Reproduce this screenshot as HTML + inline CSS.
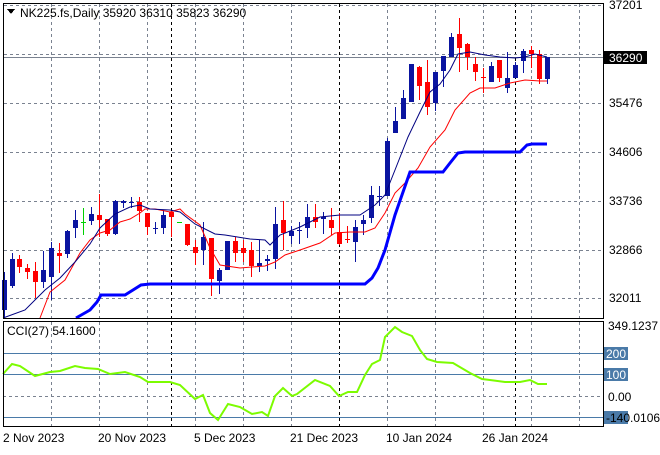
<!DOCTYPE html>
<html><head><meta charset="utf-8"><style>
html,body{margin:0;padding:0;background:#fff;}
body{width:660px;height:450px;overflow:hidden;font-family:"Liberation Sans",sans-serif;}
svg text{font-family:"Liberation Sans",sans-serif;font-size:12px;fill:#000;}
</style></head><body>
<svg id="s" width="660" height="450" xmlns="http://www.w3.org/2000/svg" shape-rendering="crispEdges">
<rect width="660" height="450" fill="#fff"/>
<g id="grid" stroke="#7a8290" stroke-dasharray="3,3" stroke-width="1"></g>
<line x1="3" y1="57.5" x2="603" y2="57.5" stroke="#7a8290"/>
<g stroke="#4a7aa8"><line x1="3" y1="353.5" x2="603" y2="353.5"/><line x1="3" y1="374.5" x2="603" y2="374.5"/><line x1="3" y1="417.5" x2="603" y2="417.5"/></g>
<line x1="3" y1="396.5" x2="603" y2="396.5" stroke="#7a8290" stroke-dasharray="3,3"/>
<g id="c"></g>
<g fill="none" shape-rendering="auto">
<polyline stroke="#ff0000" stroke-width="1" points="40,318 50,292 65,280 80,253 90,240 100,233 110,230 120,222 130,219 140,213 145,209 155,209 170,212 180,209 185,214 200,225 210,248 220,265 240,268 265,266 275,262 285,255 300,250 320,243 335,233 350,232 365,232 375,228 385,213 395,193 405,183 418,168 430,147 445,130 455,110 470,93 480,88 495,88 510,83 525,80 540,81 547,81"/>
<polyline stroke="#000080" stroke-width="1" points="3,318 25,310 45,290 60,278 75,262 90,244 100,228 115,214 130,207 140,205 150,209 170,210 180,212 195,224 215,234 225,235 250,239 265,240 270,245 280,235 300,227 320,217 340,215 360,215 375,205 385,195 395,170 408,137 420,112 430,92 440,84 450,70 458,54 470,52 485,55 500,57 515,58 525,57 535,54 547,57"/>
<polyline stroke="#0000ff" stroke-width="3" points="76,318 90,310 97,302 101,295 125,295 133,290 141,285 150,284 365,284 372,278 378,268 385,250 395,215 410,172 443,172 450,163 458,153 465,152 520,152 527,145 532,144 547,144"/>
<polyline stroke="#7cfc00" stroke-width="2" points="3,374 12,364 20,366 35,376 50,372 60,371 75,366 85,368 98,369 110,374 125,372 140,377 148,382 170,382 180,385 195,399 203,395 210,413 218,420 228,404 240,407 252,414 262,412 268,416 275,396 283,388 292,396 297,394 315,380 330,386 339,396 348,392 357,392 365,375 372,364 380,360 385,337 395,327 402,332 412,336 420,350 427,359 437,362 453,363 470,373 482,379 490,380 505,382 520,382 530,380 538,384 547,384"/>
</g>
<rect x="3.5" y="3.5" width="600" height="315" fill="none" stroke="#000"/>
<rect x="3.5" y="321.5" width="600" height="105" fill="none" stroke="#000"/>
<path d="M7,9 L15,9 L11,14 Z" fill="#000"/>
<text x="20" y="17">NK225.fs,Daily  35920 36310 35823 36290</text>
<text x="7" y="335">CCI(27) 54.1600</text>
<g id="ax"></g>
<rect x="604" y="51" width="43" height="13" fill="#000"/>
<text x="609" y="62" style="fill:#fff">36290</text>
<rect x="604" y="347" width="24" height="13" fill="#4a7aa8"/>
<rect x="604" y="368" width="24" height="13" fill="#4a7aa8"/>
<rect x="604" y="411" width="24" height="13" fill="#4a7aa8"/>
<text x="606" y="358" style="fill:#fff">200</text>
<text x="606" y="379" style="fill:#fff">100</text>
<text x="608" y="330">349.1237</text>
<text x="608" y="401">0.00</text>
<text x="606" y="422">-140.0106</text>
<text x="3" y="442">2 Nov 2023</text>
<text x="98" y="442">20 Nov 2023</text>
<text x="194" y="442">5 Dec 2023</text>
<text x="290" y="442">21 Dec 2023</text>
<text x="386" y="442">10 Jan 2024</text>
<text x="482" y="442">26 Jan 2024</text>
</svg>
<script>
var N="http://www.w3.org/2000/svg";
function el(p,t,a){var e=document.createElementNS(N,t);for(var k in a)e.setAttribute(k,a[k]);p.appendChild(e);return e;}
var g=document.getElementById('grid');
[51,99,147,195,243,291,387,435,483,531,579].forEach(function(x){el(g,'line',{x1:x+.5,y1:4,x2:x+.5,y2:318});el(g,'line',{x1:x+.5,y1:322,x2:x+.5,y2:426});});
[171,339,515].forEach(function(x){el(g,'line',{x1:x+.5,y1:4,x2:x+.5,y2:318,stroke:'#000'});el(g,'line',{x1:x+.5,y1:322,x2:x+.5,y2:426,stroke:'#000'});});
[5,54,103,152,201,250,298].forEach(function(y){el(g,'line',{x1:4,y1:y+.5,x2:603,y2:y+.5});});
var ax=document.getElementById('ax');
[[37201,9],[35476,107],[34606,156],[33736,205],[32866,254],[32011,302]].forEach(function(a){var t=el(ax,'text',{x:609,y:a[1]});t.textContent=a[0];});
// x, bodyTop, bodyBot, wickTop, wickBot, color(b/r/g)
var C=[[4,280,310,272,318,'b'],[12,259,286,253,288,'b'],[19,259,267,255,273,'r'],[27,268,272,264,279,'r'],[35,271,282,262,298,'r'],[43,270,282,251,288,'b'],[51,248,277,242,300,'b'],[59,253,256,243,273,'r'],[67,231,254,230,258,'b'],[75,220,228,210,238,'b'],[83,222,222,208,235,'g'],[91,214,221,207,225,'b'],[99,215,220,194,237,'r'],[107,219,234,219,236,'r'],[115,201,234,200,235,'b'],[123,201,203,200,208,'b'],[131,202,203,197,208,'b'],[139,202,211,197,222,'r'],[147,213,227,213,235,'r'],[155,228,229,222,234,'b'],[163,215,228,210,234,'b'],[171,212,217,212,237,'r'],[179,222,222,222,222,'g'],[187,224,245,224,246,'r'],[195,247,253,240,265,'r'],[203,237,250,222,265,'b'],[211,238,279,238,296,'r'],[219,270,281,268,294,'b'],[227,241,270,241,270,'b'],[235,241,253,237,262,'r'],[243,248,253,240,262,'r'],[251,250,266,242,277,'r'],[259,263,266,240,272,'b'],[267,259,261,255,271,'b'],[275,224,259,207,269,'b'],[283,220,233,201,250,'r'],[291,231,236,226,244,'b'],[299,230,230,222,244,'b'],[307,217,228,204,238,'b'],[315,217,222,204,228,'r'],[323,217,219,212,234,'b'],[331,220,228,208,235,'r'],[339,232,244,213,245,'r'],[347,239,239,226,243,'r'],[355,227,242,220,262,'b'],[363,220,224,215,235,'b'],[371,195,218,186,223,'b'],[379,196,196,186,206,'b'],[387,141,196,138,196,'b'],[395,121,133,107,133,'b'],[403,98,119,90,119,'b'],[411,64,102,64,102,'b'],[419,67,86,66,100,'r'],[427,82,107,60,115,'r'],[435,72,103,72,111,'b'],[443,56,71,56,87,'b'],[451,37,57,33,57,'b'],[459,34,48,18,72,'r'],[467,44,57,43,70,'r'],[475,64,72,57,81,'r'],[483,77,77,68,93,'r'],[491,66,82,62,82,'b'],[499,60,78,60,82,'r'],[507,78,88,52,93,'b'],[515,65,78,62,78,'b'],[523,51,61,49,73,'b'],[531,50,54,46,68,'r'],[539,54,79,50,84,'r'],[547,57,79,57,84,'b']];
var cg=document.getElementById('c');
var col={b:'#0a14a0',r:'#ff0000',g:'#00d000'};
C.forEach(function(c){var f=col[c[5]];
el(cg,'rect',{x:c[0],y:c[3],width:1,height:Math.max(1,c[4]-c[3]),fill:f});
el(cg,'rect',{x:c[0]-2,y:c[1],width:5,height:Math.max(1,c[2]-c[1]),fill:f});});
</script>
</body></html>
